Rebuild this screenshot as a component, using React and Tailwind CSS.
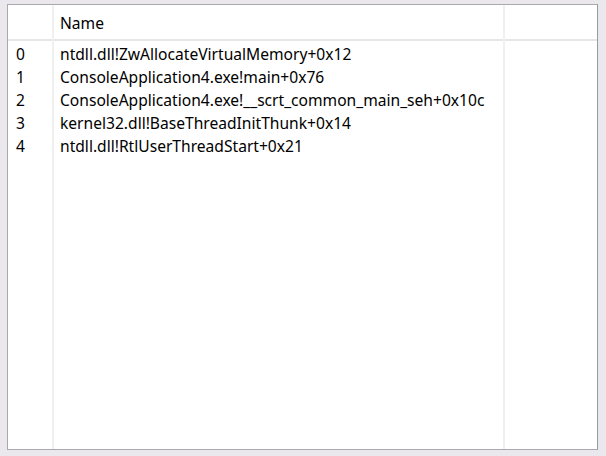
import React from 'react';

const frames = [
  'ntdll.dll!ZwAllocateVirtualMemory+0x12',
  'ConsoleApplication4.exe!main+0x76',
  'ConsoleApplication4.exe!__scrt_common_main_seh+0x10c',
  'kernel32.dll!BaseThreadInitThunk+0x14',
  'ntdll.dll!RtlUserThreadStart+0x21',
];

export default function App() {
  return (
    <div className="w-[606px] h-[456px] bg-[#eae8ed] pt-[4px] pl-[7px] font-['Noto_Sans',sans-serif] text-[15.6px] text-black">
      <div className="w-[591px] h-[446px] bg-white border border-[#a9a9ad] border-r-[#9a9a9e] flex">
        {/* index column */}
        <div className="w-[46px] flex flex-col border-r-2 border-[#f0f0f0]">
          <div className="h-[36px] border-b-2 border-[#e6e6e6]" />
          <div className="pt-[2px]">
            {frames.map((_, i) => (
              <div key={i} className="h-[23px] pl-[8px] leading-[23px]">{i}</div>
            ))}
          </div>
        </div>
        {/* name column */}
        <div className="w-[451px] flex flex-col border-r-2 border-[#f0f0f0]">
          <div className="h-[36px] border-b-2 border-[#e6e6e6] pl-[6px] leading-[23px] pt-[7px]">Name</div>
          <div className="pt-[2px]">
            {frames.map((f, i) => (
              <div key={i} className="h-[23px] pl-[6px] leading-[23px] whitespace-nowrap">{f}</div>
            ))}
          </div>
        </div>
        {/* empty column */}
        <div className="flex-1 flex flex-col">
          <div className="h-[36px] border-b-2 border-[#e6e6e6]" />
        </div>
      </div>
    </div>
  );
}
